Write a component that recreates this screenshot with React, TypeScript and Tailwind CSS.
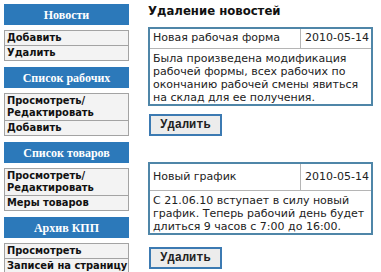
const menus: { title: string; items: string[][] }[] = [
  { title: "Новости", items: [["Добавить"], ["Удалить"]] },
  { title: "Список рабочих", items: [["Просмотреть/", "Редактировать"], ["Добавить"]] },
  { title: "Список товаров", items: [["Просмотреть/", "Редактировать"], ["Меры товаров"]] },
  { title: "Архив КПП", items: [["Просмотреть"], ["Записей на страницу"]] },
];

function NewsCard({
  title,
  date,
  text,
  headH,
}: {
  title: string;
  date: string;
  text: string;
  headH: string;
}) {
  return (
    <div className="w-[225px] border-2 border-[#4f86a8] bg-white">
      <div className={"flex border-b border-[#b5b5b5] " + headH}>
        <div className="flex-1 flex items-center pl-[3px] border-r border-[#b5b5b5]">{title}</div>
        <div className="w-[70px] flex items-center justify-end pr-[2px]">{date}</div>
      </div>
      <div className="px-[3px] pt-[3px] leading-[13px]">{text}</div>
    </div>
  );
}

function DelButton() {
  return (
    <button className="w-[73px] h-[22px] border-2 border-[#3c7ab2] bg-[#ececec] font-['Liberation_Mono',monospace] text-[12px] font-bold text-[#222]">
      Удалить
    </button>
  );
}

export default function App() {
  return (
    <div className="flex w-[381px] h-[272px] overflow-hidden bg-white font-['DejaVu_Sans',sans-serif] text-[11px] text-[#222]">
      <div className="w-[125px] ml-[4px] pt-[4px] flex flex-col">
        {menus.map((m, i) => (
          <div key={i} className={i > 0 ? "mt-[6px]" : ""}>
            <div className="h-[21px] bg-[#2c79ba] flex items-center justify-center text-white font-bold font-['Liberation_Serif',serif] text-[12px]">
              {m.title}
            </div>
            <div className="mt-[5px] border border-[#a3a3a3] bg-[#f3f3f3]">
              {m.items.map((lines, j) => (
                <div
                  key={j}
                  className={
                    "pl-[2px] py-[1px] font-bold font-['DejaVu_Sans_Condensed','DejaVu_Sans',sans-serif] text-[11px] leading-[12px] text-[#111] " +
                    (j > 0 ? "border-t border-[#a3a3a3]" : "")
                  }
                >
                  {lines.map((l, k) => (
                    <div key={k} className="whitespace-nowrap">{l}</div>
                  ))}
                </div>
              ))}
            </div>
          </div>
        ))}
      </div>
      <div className="ml-[19px] pt-[3px] flex flex-col items-start">
        <h1 className="text-[13px] font-bold leading-[16px] text-[#111] font-['DejaVu_Sans_Condensed','DejaVu_Sans',sans-serif]">
          Удаление новостей
        </h1>
        <div className="mt-[8px]">
          <NewsCard
            title="Новая рабочая форма"
            date="2010-05-14"
            headH="h-[20px]"
            text="Была произведена модификация рабочей формы, всех рабочих по окончанию рабочей смены явиться на склад для ее получения."
          />
        </div>
        <div className="mt-[8px] ml-[1px]">
          <DelButton />
        </div>
        <div className="mt-[26px]">
          <NewsCard
            title="Новый график"
            date="2010-05-14"
            headH="h-[27px]"
            text="С 21.06.10 вступает в силу новый график. Теперь рабочий день будет длиться 9 часов с 7:00 до 16:00."
          />
        </div>
        <div className="mt-[12px] ml-[1px]">
          <DelButton />
        </div>
      </div>
    </div>
  );
}
